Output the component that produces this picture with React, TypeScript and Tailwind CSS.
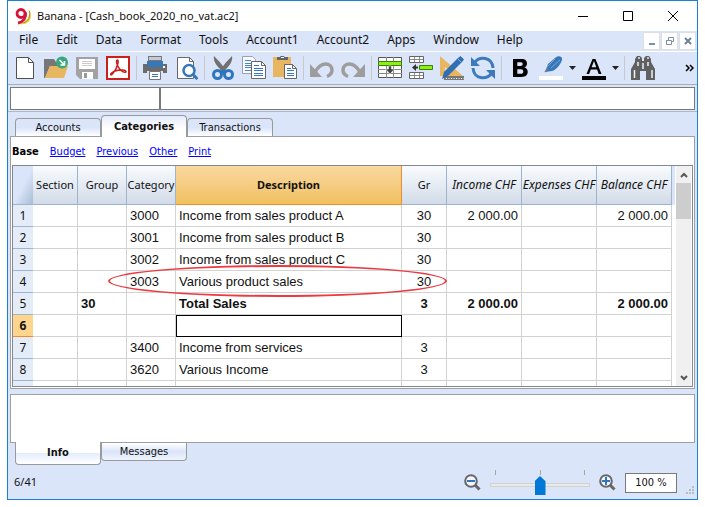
import React from "react";

const ui = "font-['Noto_Sans','Open_Sans',sans-serif]";
const tahoma = "font-['DejaVu_Sans_Condensed','DejaVu_Sans',sans-serif]";
const helv = "font-['Liberation_Sans',Arial,sans-serif]";

const menus = ["File", "Edit", "Data", "Format", "Tools", "Account1", "Account2", "Apps", "Window", "Help"];

type Row = { n: number; group?: string; cat?: string; desc?: string; gr?: string; inc?: string; bal?: string; bold?: boolean };
const rows: Row[] = [
  { n: 1, cat: "3000", desc: "Income from sales product A", gr: "30", inc: "2 000.00", bal: "2 000.00" },
  { n: 2, cat: "3001", desc: "Income from sales product B", gr: "30" },
  { n: 3, cat: "3002", desc: "Income from sales product C", gr: "30" },
  { n: 4, cat: "3003", desc: "Various product sales", gr: "30" },
  { n: 5, group: "30", desc: "Total Sales", gr: "3", inc: "2 000.00", bal: "2 000.00", bold: true },
  { n: 6 },
  { n: 7, cat: "3400", desc: "Income from services", gr: "3" },
  { n: 8, cat: "3620", desc: "Various Income", gr: "3" },
];

function Svg({ children }: { children: React.ReactNode }) {
  return (
    <svg width="24" height="24" viewBox="0 0 24 24" fill="none" aria-hidden="true">
      {children}
    </svg>
  );
}

function Tool({ label, children }: { label: string; children: React.ReactNode }) {
  return (
    <button type="button" aria-label={label} className="w-[31px] shrink-0 pl-[3px]">
      <Svg>{children}</Svg>
    </button>
  );
}

function DropTool({ label, children }: { label: string; children: React.ReactNode }) {
  return (
    <button type="button" aria-label={label} className="flex w-[43px] shrink-0 items-center gap-[6px] pl-[3px]">
      <Svg>{children}</Svg>
      <svg width="7" height="4" viewBox="0 0 7 4" aria-hidden="true"><path d="M0 0h7L3.5 4z" fill="#222" /></svg>
    </button>
  );
}

function Sep() {
  return <div className="mr-[3px] ml-[2px] h-6 w-px shrink-0 bg-[#c6c8cc]" />;
}

function Toolbar() {
  return (
    <div className="flex h-[33px] items-center overflow-hidden border-b border-[#a9acb1] pr-[3px] pl-[2px]">
      <Tool label="New">
        <path d="M3.500 1.500h12l5 5v16h-17z" fill="#fff" stroke="#505050" />
        <path d="M15.500 1.500v5h5" stroke="#505050" />
      </Tool>
      <Tool label="Open">
        <path d="M0 3h10l2 3h7v4H6L1 22H0z" fill="#777" />
        <path d="M6 10h18l-4 12H1z" fill="#e8b560" />
        <circle cx="18" cy="6.500" r="6" fill="#38a87c" />
        <path d="M15.500 4l5 5m0-4v4h-4" stroke="#fff" strokeWidth="1.600" />
      </Tool>
      <Tool label="Save">
        <path d="M1 1h22v22H5l-4-4z" fill="#a2a2a2" />
        <path d="M4 3h16v10H4z" fill="#fff" />
        <path d="M7 5.500h10M7 7.500h10M7 9.500h10" stroke="#ccc" />
        <path d="M7 16h11v7H7z" fill="#fff" />
        <path d="M9 17h3v5H9z" fill="#999" />
      </Tool>
      <Tool label="Export PDF">
        <rect x="1" y="1" width="22" height="22" fill="#fff" stroke="#c9201b" strokeWidth="2" />
        <path d="M11.500 4c-1.500 0-1 3 0 5.500 1.300 3.200 4.500 6.500 7 6.800 2.400.3 2-2-1.500-2.200-4.500-.200-9 1-11.500 3-1.800 1.500-.500 2.500.9 1 2.300-2.500 4.500-6.800 5.300-9.900.6-2.500.7-4.200-.2-4.200z" stroke="#c9201b" strokeWidth="1.500" />
      </Tool>
      <Sep />
      <Tool label="Print">
        <path d="M5 0h14v9H5z" fill="#777" /><path d="M6 1h12v3H6z" fill="#c9cbd0" />
        <path d="M0 8h24v9H0z" fill="#6c6c6c" />
        <path d="M4 5h16v6H4z" fill="#3577b8" />
        <path d="M4 15h16v3H4z" fill="#dbe5f9" />
        <path d="M6.500 15.500h11v8h-11z" fill="#fff" stroke="#777" />
        <path d="M9 18.500h6M9 20.500h6" stroke="#3577b8" />
        <path d="M20 10h2v2h-2z" fill="#fff" />
      </Tool>
      <Tool label="Print preview">
        <path d="M3.500 1.500h12l4 4v17h-16z" fill="#fff" stroke="#666" /><path d="M15.500 1.500v4h4" stroke="#666" />
        <circle cx="15" cy="14.500" r="5.500" fill="#fff" stroke="#3577b8" strokeWidth="2.500" />
        <path d="M19 18.500l4.500 4.500" stroke="#3577b8" strokeWidth="3" />
      </Tool>
      <Sep />
      <Tool label="Cut">
        <path d="M3 0c6 6 9 10 12 14h-5C5 9 2 5 3 0z" fill="#707070" />
        <path d="M21 0C15 6 12 10 9 14h5c5-5 8-9 7-14z" fill="#707070" />
        <circle cx="6.500" cy="18.500" r="4" stroke="#2f75bd" strokeWidth="3" />
        <circle cx="17.500" cy="18.500" r="4" stroke="#2f75bd" strokeWidth="3" />
        <path d="M9 14h6v4H9z" fill="#2f75bd" />
      </Tool>
      <Tool label="Copy">
        <path d="M.5.500h10l3 3v14H.500z" fill="#f8faff" stroke="#9aa3b5" />
        <path d="M3 4.500h6M3 7.500h7M3 9.500h7M3 11.500h7M3 14.500h6" stroke="#4a86c5" />
        <path d="M9.500 5.500h10l4 4v13h-14z" fill="#fff" stroke="#666" /><path d="M19.500 5.500v4h4" stroke="#666" />
        <path d="M12 9.500h5M12 12.500h9M12 14.500h9M12 17.500h9M12 19.500h9" stroke="#3577b8" />
      </Tool>
      <Tool label="Paste">
        <path d="M0 1h18v20H0z" fill="#e8b560" /><path d="M4 1h3c.500-2 4-2 4.500 0H15v3H4z" fill="#666" /><path d="M8 1h3v1H8z" fill="#fff" />
        <path d="M11.500 8.500h8l4 4v10h-12z" fill="#fff" stroke="#666" /><path d="M19.500 8.500v4h4" stroke="#666" />
        <path d="M14 12.500h4M14 14.500h7M14 17.500h7M14 19.500h7" stroke="#3577b8" />
      </Tool>
      <Sep />
      <Tool label="Undo">
        <path d="M0 8v13h12z" fill="#9d9d9d" />
        <path d="M5 16C8 11 11 8 15.500 8c4 0 6.500 2.500 6.500 6 0 3-1.500 5-5 6.500" stroke="#9d9d9d" strokeWidth="3.500" />
      </Tool>
      <Tool label="Redo">
        <path d="M24 8v13H12z" fill="#9d9d9d" />
        <path d="M19 16C16 11 13 8 8.500 8 4.500 8 2 10.500 2 14c0 3 1.500 5 5 6.500" stroke="#9d9d9d" strokeWidth="3.500" />
      </Tool>
      <Sep />
      <Tool label="Insert row">
        <path d="M.5 1.500h23v20H.500z" fill="#fff" stroke="#555" />
        <path d="M8.500 1v21M15.500 1v21M0 13.500h24M0 17.500h24" stroke="#888" />
        <path d="M.5 5.500h23v4H.500z" fill="#8df014" stroke="#3d8010" />
        <path d="M10.500 10h3v3h3L12 18l-4.500-5h3z" fill="#444" stroke="#fff" strokeWidth=".5" />
      </Tool>
      <Tool label="Insert cells">
        <path d="M.5.500h14v6H.500zM.5 16.500h14v6H.500z" fill="#fff" stroke="#666" />
        <path d="M5.500 1v5M10.500 1v5M1 3.500h13M5.500 17v5M10.500 17v5M1 19.500h13" stroke="#888" />
        <path d="M10.500 9.500h13v4h-13z" fill="#8df014" stroke="#3d8010" />
        <path d="M9 10.500H7V8l-4 3.500L7 15v-2.500h2z" fill="#333" />
      </Tool>
      <Tool label="Setup">
        <path d="M0 0v20h23z" fill="#e8b560" /><path d="M5 11v5h6z" fill="#dbe5f9" />
        <path d="M4 20h20v4H4z" fill="#777" /><path d="M6 22.500h18" stroke="#fff" strokeDasharray="1 1.500" />
        <path d="M2 23l2-7L18 2l2.500-2L24 3.500 22 6 8 20z" fill="#2f6fb2" /><path d="M17.500 2.500l4 4" stroke="#8db1dc" />
      </Tool>
      <Tool label="Recalculate">
        <path d="M4 6c4.500-5.500 17-6 18 6M20 18C15.500 23.500 3 24 2 12" stroke="#3c7abb" strokeWidth="3" />
        <path d="M0 1v9h9zM24 23v-9h-9z" fill="#3c7abb" />
      </Tool>
      <Sep />
      <Tool label="Bold">
        <path fillRule="evenodd" d="M5 3h8.500c4 0 5.500 2 5.500 4.600 0 2-.9 3.300-2.500 3.900 2 .6 3.200 2.100 3.200 4.300 0 3.200-2 5.200-6.200 5.200H5zM9.300 6.200v3.900h3c1.700 0 2.400-.7 2.400-2s-.7-1.900-2.400-1.900zm0 7v4.500h3.400c1.800 0 2.600-.8 2.600-2.300s-.8-2.200-2.600-2.200z" fill="#000" />
      </Tool>
      <DropTool label="Highlight color">
        <path d="M6 16L9 8l7-6c3-3 8-2 7 2-1 4-6 10-10 11z" fill="#3979b9" /><path d="M8 11l8-8M12 12l9-8" stroke="#73a4d3" />
        <path d="M6 16l3-3" stroke="#777" strokeWidth="1.500" />
        <path d="M0 20h24v4H0z" fill="#fff" />
      </DropTool>
      <DropTool label="Text color">
        <path d="M4.500 18L10.500 3h3l6 15h-2.800l-1.600-4.500H8.800L7.200 18zM9.600 11.300h4.700L12 5z" fill="#000" fillRule="evenodd" />
        <path d="M0 20h24v4H0z" fill="#000" />
      </DropTool>
      <Sep />
      <Tool label="Find">
        <path d="M6 0h3l2 2v3h2V2l2-2h3l2 3v3l4 7v11h-9v-9h-6v9H0V13l4-7V3z" fill="#606060" />
        <path d="M8 1v2M17 1v2" stroke="#dbe5f9" strokeWidth="1.500" />
        <path d="M7 6v4M17 6v4M3.500 14v8M21 14v8M12 7v6" stroke="#eef2fb" strokeWidth="1.500" />
      </Tool>
      <button type="button" aria-label="More tools" className="ml-auto">
        <svg width="9" height="8" viewBox="0 0 9 8" fill="none" stroke="#000" strokeWidth="1.500" aria-hidden="true"><path d="M1 1l3 3-3 3M5 1l3 3-3 3" /></svg>
      </button>
    </div>
  );
}

function Magnifier({ plus }: { plus?: boolean }) {
  return (
    <svg width="17" height="17" viewBox="0 0 17 17" fill="none" aria-hidden="true">
      <path d="M11 11l4.500 4.500" stroke="#666" strokeWidth="3" />
      <circle cx="7" cy="7" r="5.800" fill="#f4f7fd" stroke="#666" strokeWidth="2" />
      <path d={plus ? "M3 7h8M7 3v8" : "M3 7h8"} stroke="#2f75bd" strokeWidth="2" />
    </svg>
  );
}

const headCell = "border-r border-b border-[#9cb4cf] bg-gradient-to-b from-[#f9fcff] to-[#d2dbe8] p-0 font-normal whitespace-nowrap";
const amountHead = `${headCell} text-xs italic`;
const cell = "border-r border-b border-[#d2d2d2] p-0";

function Grid() {
  return (
    <table className="h-fit w-0 min-w-0 flex-1 table-fixed border-separate border-spacing-0">
      <colgroup>
        <col className="w-5" />
        <col className="w-[45px]" />
        <col className="w-[49px]" />
        <col className="w-[49px]" />
        <col />
        <col className="w-[45px]" />
        <col className="w-[75px]" />
        <col className="w-[75px]" />
        <col className="w-[75px]" />
      </colgroup>
      <thead className={`${ui} text-[11px]`}>
        <tr className="h-[39px]">
          <td className="border-b border-[#9cb4cf] bg-gradient-to-br from-[#dbe5f9] from-50% to-[#a7bdd7]" />
          <th className={headCell}>Section</th>
          <th className={headCell}>Group</th>
          <th className={headCell}>Category</th>
          <th className="border-r border-b border-[#f08c2e] bg-gradient-to-b from-[#f9d9a0] to-[#f1c05f] p-0 font-bold">Description</th>
          <th className={headCell}>Gr</th>
          <th className={amountHead}>Income CHF</th>
          <th className={amountHead}>Expenses CHF</th>
          <th className={amountHead}>Balance CHF</th>
        </tr>
      </thead>
      <tbody className={`${helv} text-[13px] leading-5`}>
        {rows.map((r) => (
          <tr key={r.n} className={r.bold ? "h-[22px] font-bold" : "h-[22px]"}>
            <th
              scope="row"
              className={
                r.n === 6
                  ? `${ui} border-b border-[#f08c2e] bg-[#ffd58d] p-0 text-xs font-bold`
                  : `${ui} border-b border-[#9cb4cf] bg-[#e4ecf7] p-0 text-xs font-normal`
              }
            >
              {r.n}
            </th>
            <td className={cell} />
            <td className={`${cell} pl-[3px]`}>{r.group}</td>
            <td className={`${cell} pl-[3px]`}>{r.cat}</td>
            <td className={r.n === 6 ? `${cell} outline -outline-offset-1 outline-black` : `${cell} pl-[3px] whitespace-nowrap`}>{r.desc}</td>
            <td className={`${cell} text-center`}>{r.gr}</td>
            <td className={`${cell} pr-[3px] text-right`}>{r.inc}</td>
            <td className={cell} />
            <td className={`${cell} pr-[3px] text-right`}>{r.bal}</td>
          </tr>
        ))}
        <tr className="h-[5px]">
          <td className="bg-[#e4ecf7] p-0" />
          {[1, 2, 3, 4, 5, 6, 7, 8].map((i) => (
            <td key={i} className="border-r border-[#d2d2d2] p-0" />
          ))}
        </tr>
      </tbody>
    </table>
  );
}

const mdi = "flex h-[18px] w-[17px] items-center justify-center border border-[#dedfe2] bg-white";

export default function App() {
  return (
    <div className="bg-white px-[7px] pb-[7px]">
      <div className={`${ui} border border-[#1a82d2] bg-[#dbe5f9] text-xs text-[#111]`}>
        <header className="flex h-[30px] items-center bg-white pl-[7px]">
          <svg width="16" height="17" viewBox="0 0 16 17" fill="none" aria-hidden="true">
            <path d="M13 1c3 6 0 12-9 15 6 1 10-1 11.500-5C16.500 7 15.500 3 13 1z" fill="#edd04b" />
            <path d="M14.500 3c1 6-1 10-6 12" stroke="#aa8d28" />
            <ellipse cx="6" cy="5.500" rx="4" ry="4" stroke="#d4143c" strokeWidth="2.800" />
            <path d="M10.500 4.500c1 5-2 9.500-7.500 10.500" stroke="#d4143c" strokeWidth="2.800" />
          </svg>
          <h1 className="ml-[6px] text-[11px] whitespace-nowrap">Banana - [Cash_book_2020_no_vat.ac2]</h1>
          <div className="ml-auto flex gap-[33px] pr-[18px]">
            <button type="button" aria-label="Minimize"><svg width="12" height="12" aria-hidden="true"><path d="M1 6.500h10" stroke="#000" /></svg></button>
            <button type="button" aria-label="Maximize"><svg width="12" height="12" fill="none" aria-hidden="true"><path d="M1.500 1.500h9v9h-9z" stroke="#000" /></svg></button>
            <button type="button" aria-label="Close"><svg width="12" height="12" aria-hidden="true"><path d="M1 1l10 10M11 1L1 11" stroke="#000" /></svg></button>
          </div>
        </header>

        <nav className="flex h-[21px] items-center border-b border-white pl-[2px]">
          {menus.map((m) => (
            <button type="button" key={m} className="h-5 px-[9px] pb-[2px]">{m}</button>
          ))}
          <div className="ml-auto flex gap-[1px] pr-px">
            <button type="button" aria-label="Minimize document" className={mdi}><svg width="8" height="8" aria-hidden="true"><path d="M1 7h6" stroke="#7f8fa6" strokeWidth="2" /></svg></button>
            <button type="button" aria-label="Restore document" className={mdi}><svg width="8" height="8" fill="none" stroke="#7f8fa6" aria-hidden="true"><path d="M2.500 3V.5h5v4H6M0 3.500h5.500v4h-5V3" /></svg></button>
            <button type="button" aria-label="Close document" className={mdi}><svg width="8" height="8" stroke="#6f8198" strokeWidth="2" aria-hidden="true"><path d="M1 1l6 6M7 1L1 7" /></svg></button>
          </div>
        </nav>

        <Toolbar />

        <div className="border-b border-[#b3b7be] px-[2px] pt-[2px] pb-px">
          <div className="flex h-[23px] border border-[#77797f] bg-white">
            <input aria-label="Cell" className="w-[150px] border-r-2 border-[#77797f] px-1 outline-none" />
            <input aria-label="Value" className="min-w-0 flex-1 px-1 outline-none" />
          </div>
        </div>

        <div className="px-[2px] pt-[3px]">
          <div role="tablist" className={`${tahoma} flex items-end pl-[5px] text-[11px]`}>
            <button type="button" role="tab" className="h-[18px] w-[86px] rounded-t border border-b-0 border-[#9a9a9a] bg-gradient-to-b from-[#dbe5f9] via-[#dbe5f9] to-white pt-[2px]">Accounts</button>
            <button type="button" role="tab" aria-selected="true" className="z-10 -mb-px h-[22px] w-[86px] rounded-t border border-b-0 border-[#9a9a9a] bg-gradient-to-b from-[#e4ecfb] to-white to-60% pt-[2px] font-bold">Categories</button>
            <button type="button" role="tab" className="h-[18px] w-[86px] rounded-t border border-b-0 border-[#9a9a9a] bg-gradient-to-b from-[#dbe5f9] via-[#dbe5f9] to-white pt-[2px]">Transactions</button>
          </div>
          <div className="border border-[#a0a0a0] bg-white px-px pb-px">
            <div className={`${tahoma} flex h-7 items-center gap-[11px] pt-[3px] text-[11px] text-[#00f]`}>
              <strong className="text-black">Base</strong>
              <a href="#budget" className="underline">Budget</a>
              <a href="#previous" className="underline">Previous</a>
              <a href="#other" className="underline">Other</a>
              <a href="#print" className="underline">Print</a>
            </div>
            <div className="relative flex border border-[#828790]">
              <Grid />
              <div className="mr-px h-[39px] w-[3px] bg-[#dbe5f9]" />
              <div className="flex w-[15px] flex-col items-center bg-[#f0f0f0]">
                <button type="button" aria-label="Scroll up" className="flex h-[17px] items-center"><svg width="8" height="6" fill="none" aria-hidden="true"><path d="M1 5l3-3 3 3" stroke="#555" strokeWidth="2" /></svg></button>
                <div className="h-9 w-full bg-[#cdcdcd]" />
                <button type="button" aria-label="Scroll down" className="mt-auto flex h-[17px] items-center"><svg width="8" height="6" fill="none" aria-hidden="true"><path d="M1 1l3 3 3-3" stroke="#555" strokeWidth="2" /></svg></button>
              </div>
              <div className="w-px" />
              <div className="pointer-events-none absolute top-[99px] right-[245px] left-[95px] h-8 rounded-[50%] border-2 border-[#ec3a40]" />
            </div>
          </div>

          <div className="mt-[5px] h-[49px] border border-[#a0a0a0] bg-white" />
          <div role="tablist" className={`${tahoma} flex items-start pl-[5px] text-[11px]`}>
            <button type="button" role="tab" aria-selected="true" className="z-10 -mt-px h-[23px] w-[86px] rounded-b border border-t-0 border-[#9a9a9a] bg-gradient-to-b from-white from-50% via-[#e4ecfb] to-white pt-px font-bold">Info</button>
            <button type="button" role="tab" className="h-[18px] w-[86px] rounded-b border border-t-0 border-[#9a9a9a] bg-gradient-to-b from-white via-[#dbe5f9] to-[#eef3fd] pt-px">Messages</button>
          </div>
        </div>

        <footer className="flex h-[34px] items-center pt-px pr-[2px] pl-[6px]">
          <span className="text-[11px]">6/41</span>
          <div className="ml-auto flex items-center">
            <button type="button" aria-label="Zoom out"><Magnifier /></button>
            <div className="mx-[9px] flex w-[100px] flex-col">
              <div className="flex h-[5px] justify-between px-[5px]">
                <i className="w-px bg-[#a5a69c]" /><i className="w-px bg-[#a5a69c]" /><i className="w-px bg-[#a5a69c]" />
              </div>
              <input
                type="range"
                aria-label="Zoom"
                min="0"
                max="200"
                defaultValue="100"
                className="h-5 w-full appearance-none bg-transparent [&::-webkit-slider-runnable-track]:h-1 [&::-webkit-slider-runnable-track]:border [&::-webkit-slider-runnable-track]:border-[#d2d3d0] [&::-webkit-slider-runnable-track]:bg-[#e7e9ea] [&::-webkit-slider-thumb]:-mt-2 [&::-webkit-slider-thumb]:h-[19px] [&::-webkit-slider-thumb]:w-[11px] [&::-webkit-slider-thumb]:appearance-none [&::-webkit-slider-thumb]:bg-[#0078d7] [&::-webkit-slider-thumb]:[clip-path:polygon(0_28%,50%_0,100%_28%,100%_100%,0_100%)]"
              />
            </div>
            <button type="button" aria-label="Zoom in"><Magnifier plus /></button>
            <input aria-label="Zoom level" defaultValue="100 %" className={`${tahoma} ml-[9px] h-5 w-[52px] border border-[#77797f] bg-white text-center text-[11px] outline-none`} />
            <svg className="ml-[9px] self-end" width="9" height="9" fill="#b8bcc4" aria-hidden="true"><path d="M6 0h2v2H6zM3 3h2v2H3zM6 3h2v2H6zM0 6h2v2H0zM3 6h2v2H3zM6 6h2v2H6z" /></svg>
          </div>
        </footer>
      </div>
    </div>
  );
}
